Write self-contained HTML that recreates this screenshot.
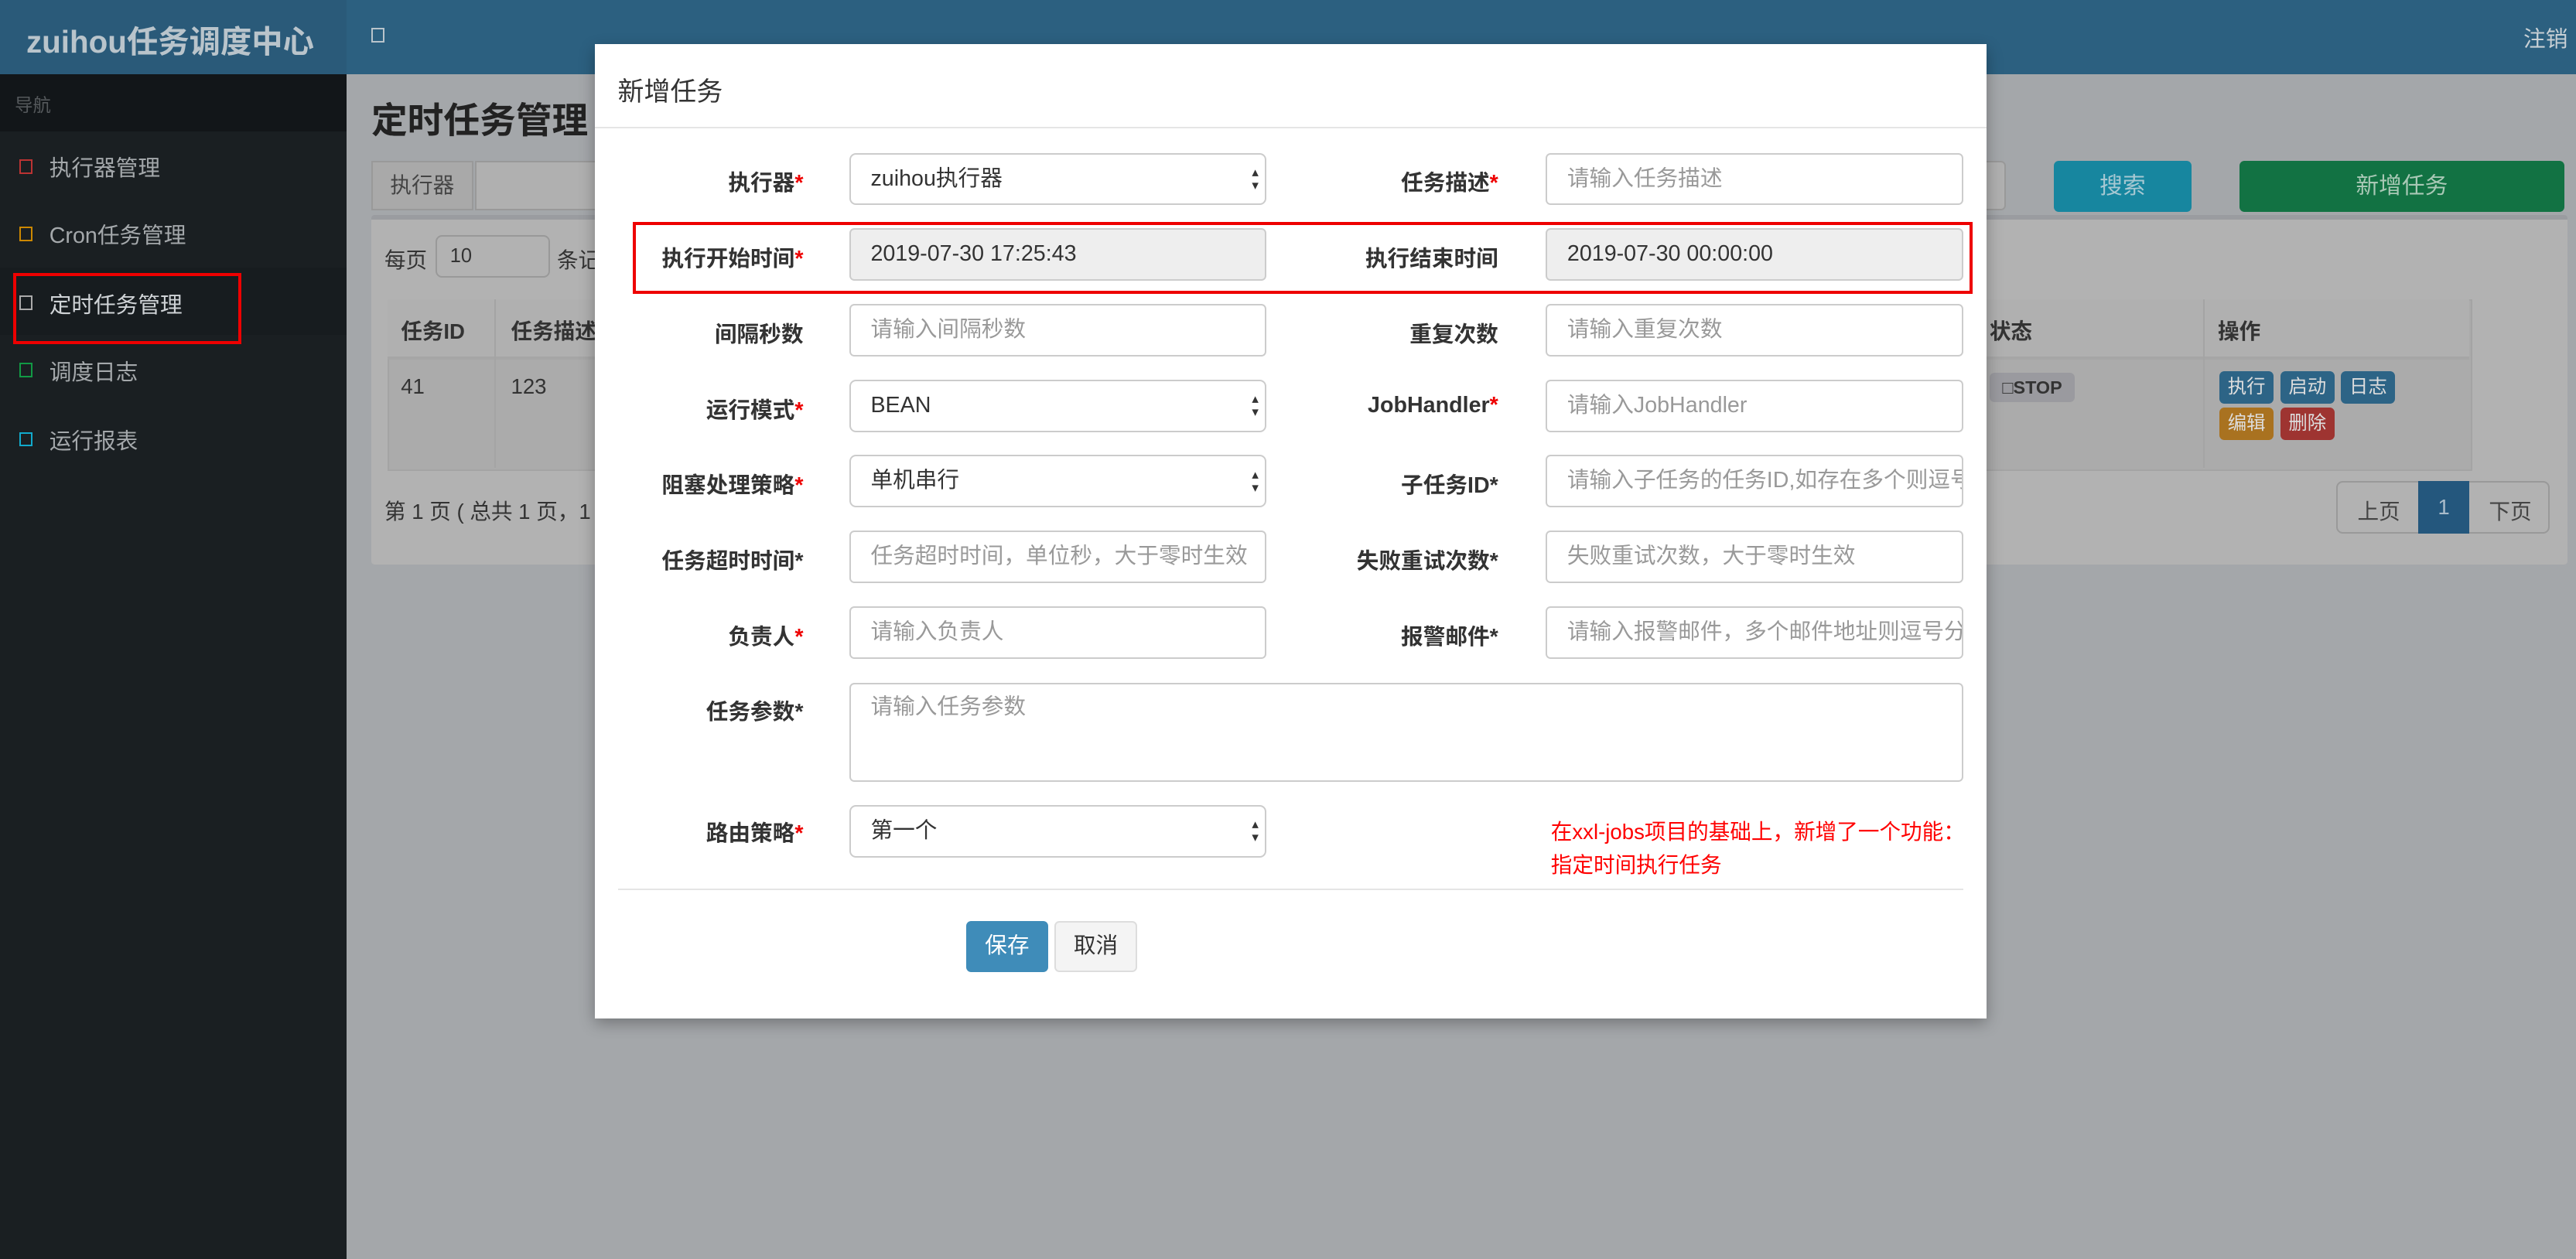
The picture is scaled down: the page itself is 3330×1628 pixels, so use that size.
<!DOCTYPE html>
<html><head><meta charset="utf-8"><style>
html,body{margin:0;padding:0;width:3330px;height:1628px;overflow:hidden;background:#a4a7aa}
#w{zoom:2.12372;width:1568px;height:767px;position:relative;font-family:"Liberation Sans","Noto Sans CJK SC",sans-serif;font-size:13px;color:#333}
.a{position:absolute}
.nav{color:#a4a8ab;font-size:13.5px;left:30px}
.sq{position:absolute;left:12px;width:6px;height:7px;border:1.3px solid}
.lbl{position:absolute;width:140px;text-align:right;font-weight:bold;font-size:13.5px;color:#333}
.lbl i{color:#e00;font-style:normal}
.inp{position:absolute;border:1px solid #ccc;border-radius:3px;background:#fff;box-sizing:border-box;height:32px;padding:0 12px;line-height:30px;color:#999;font-size:13.5px;white-space:nowrap;overflow:hidden}
.sel{color:#333;border-radius:4px}
.sel:after{content:"▴\A▾";white-space:pre;position:absolute;right:4px;top:7px;font-size:8px;line-height:8px;color:#333}
.dis{background:#eee;color:#333}
.btn{position:absolute;color:#ddd;border-radius:3px;text-align:center;font-size:11.5px;line-height:20px;height:20px}
</style></head><body><div id="w">
<!-- top bar -->
<div class="a" style="left:0;top:0;width:1568px;height:45px;background:#2c6080"></div>
<!-- sidebar -->
<div class="a" style="left:0;top:0;width:211px;height:767px;background:#1a1f22"></div>
<div class="a" style="left:0;top:0;width:211px;height:45px;background:#2a5a79"></div>
<div class="a" style="left:16px;top:10px;font-size:19px;font-weight:bold;color:#b9c4cb">zuihou任务调度中心</div>
<div class="a" style="left:226px;top:17px;width:6px;height:7px;border:1.3px solid #b9c4cb"></div>
<div class="a" style="left:1536px;top:13px;color:#c8d0d5;font-size:13.5px">注销</div>
<div class="a" style="left:0;top:45px;width:211px;height:35px;background:#121619"></div>
<div class="a" style="left:9px;top:55px;color:#55595c;font-size:11px">导航</div>
<div class="a" style="left:0;top:163px;width:211px;height:41px;background:#171c1f"></div>
<div class="a" style="left:0;top:80px;width:211px;height:0"><span class="sq" style="top:17px;border-color:#b33"></span><span class="sq" style="top:58px;border-color:#c80"></span><span class="sq" style="top:100px;border-color:#aaa"></span><span class="sq" style="top:141px;border-color:#194"></span><span class="sq" style="top:183px;border-color:#1ac"></span></div>
<div class="a nav" style="top:92px">执行器管理</div>
<div class="a nav" style="top:133px">Cron任务管理</div>
<div class="a nav" style="top:175px;color:#cfd3d6">定时任务管理</div>
<div class="a nav" style="top:216px">调度日志</div>
<div class="a nav" style="top:258px">运行报表</div>
<div class="a" style="left:8px;top:166px;width:135px;height:40px;border:2px solid #e00"></div>
<!-- content -->
<div class="a" style="left:226px;top:56px;font-size:22px;font-weight:bold;color:#222">定时任务管理</div>
<div class="a" style="left:226px;top:98px;width:62px;height:30px;border:1px solid #999;background:#a9a9a9;box-sizing:border-box;line-height:28px;text-align:center;color:#444">执行器</div>
<div class="a" style="left:289px;top:98px;width:932px;height:30px;border:1px solid #999;background:#b0b0b0;box-sizing:border-box;border-radius:0 3px 3px 0"></div>
<div class="a" style="left:1250px;top:98px;width:84px;height:31px;background:#17869f;border-radius:3px;color:#a6c8d2;text-align:center;line-height:31px;font-size:14px">搜索</div>
<div class="a" style="left:1363px;top:98px;width:198px;height:31px;background:#127243;border-radius:3px;color:#a8c8b5;text-align:center;line-height:31px;font-size:14px">新增任务</div>
<div class="a" style="left:226px;top:131px;width:1337px;height:210px;background:#b2b2b2;border-top:3px solid #9a9ca0;border-radius:2px"></div>
<div class="a" style="left:234px;top:148px;color:#333">每页</div>
<div class="a" style="left:265px;top:143px;width:70px;height:26px;border:1px solid #999;border-radius:4px;box-sizing:border-box;line-height:24px;padding-left:8px;font-size:12px">10</div>
<div class="a" style="left:339px;top:148px">条记</div>
<div class="a" style="left:236px;top:182px;width:1267px;height:103px;background:#ababab;border:1px solid #a4a4a4"></div>
<div class="a" style="left:236px;top:182px;width:1267px;height:35px;background:#b0b0b0;border-bottom:2px solid #a6a6a6"></div>
<div class="a" style="left:244px;top:191px;font-weight:bold">任务ID</div>
<div class="a" style="left:301px;top:182px;width:1px;height:103px;background:#a4a4a4"></div>
<div class="a" style="left:311px;top:191px;font-weight:bold">任务描述</div>
<div class="a" style="left:244px;top:228px">41</div><div class="a" style="left:311px;top:228px">123</div>
<div class="a" style="left:1211px;top:191px;font-weight:bold">状态</div>
<div class="a" style="left:1341px;top:182px;width:1px;height:103px;background:#a4a4a4"></div>
<div class="a" style="left:1350px;top:191px;font-weight:bold">操作</div>
<div class="a" style="left:1211px;top:227px;width:52px;height:18px;background:#9a9a9f;border-radius:3px;font-size:11px;font-weight:bold;line-height:18px;text-align:center;color:#333">□STOP</div>
<div class="btn" style="left:1351px;top:226px;width:33px;background:#2d6486">执行</div>
<div class="btn" style="left:1388px;top:226px;width:33px;background:#2d6486">启动</div>
<div class="btn" style="left:1425px;top:226px;width:33px;background:#2d6486">日志</div>
<div class="btn" style="left:1351px;top:248px;width:33px;background:#a97220">编辑</div>
<div class="btn" style="left:1388px;top:248px;width:33px;background:#9e3431">删除</div>
<div class="a" style="left:234px;top:301px">第 1 页 ( 总共 1 页，1</div>
<div class="a" style="left:1422px;top:293px;width:130px;height:32px;border:1px solid #999;border-radius:4px;box-sizing:border-box;background:#b2b2b2"></div>
<div class="a" style="left:1435px;top:301px;color:#444">上页</div>
<div class="a" style="left:1472px;top:293px;width:31px;height:32px;background:#24577d;color:#a9bccb;text-align:center;line-height:32px">1</div>
<div class="a" style="left:1515px;top:301px;color:#444">下页</div>
<!-- modal -->
<div class="a" style="left:362px;top:27px;width:847px;height:593px;background:#fff;box-shadow:0 3px 9px rgba(0,0,0,.3)"></div>
<div class="a" style="left:376px;top:43px;font-size:16px;color:#333">新增任务</div>
<div class="a" style="left:362px;top:77px;width:847px;height:1px;background:#e5e5e5"></div>
<div class="lbl" style="left:349px;top:101px">执行器<i>*</i></div>
<div class="inp sel" style="left:517px;top:93px;width:254px">zuihou执行器</div>
<div class="lbl" style="left:772px;top:101px">任务描述<i>*</i></div>
<div class="inp" style="left:941px;top:93px;width:254px">请输入任务描述</div>
<div class="lbl" style="left:349px;top:147px">执行开始时间<i>*</i></div>
<div class="inp dis" style="left:517px;top:139px;width:254px">2019-07-30 17:25:43</div>
<div class="lbl" style="left:772px;top:147px">执行结束时间</div>
<div class="inp dis" style="left:941px;top:139px;width:254px">2019-07-30 00:00:00</div>
<div class="a" style="left:385px;top:135px;width:812px;height:40px;border:2px solid #e00"></div>
<div class="lbl" style="left:349px;top:193px">间隔秒数</div>
<div class="inp" style="left:517px;top:185px;width:254px">请输入间隔秒数</div>
<div class="lbl" style="left:772px;top:193px">重复次数</div>
<div class="inp" style="left:941px;top:185px;width:254px">请输入重复次数</div>
<div class="lbl" style="left:349px;top:239px">运行模式<i>*</i></div>
<div class="inp sel" style="left:517px;top:231px;width:254px">BEAN</div>
<div class="lbl" style="left:772px;top:239px">JobHandler<i>*</i></div>
<div class="inp" style="left:941px;top:231px;width:254px">请输入JobHandler</div>
<div class="lbl" style="left:349px;top:285px">阻塞处理策略<i>*</i></div>
<div class="inp sel" style="left:517px;top:277px;width:254px">单机串行</div>
<div class="lbl" style="left:772px;top:285px">子任务ID*</div>
<div class="inp" style="left:941px;top:277px;width:254px">请输入子任务的任务ID,如存在多个则逗号分隔</div>
<div class="lbl" style="left:349px;top:331px">任务超时时间*</div>
<div class="inp" style="left:517px;top:323px;width:254px">任务超时时间，单位秒，大于零时生效</div>
<div class="lbl" style="left:772px;top:331px">失败重试次数*</div>
<div class="inp" style="left:941px;top:323px;width:254px">失败重试次数，大于零时生效</div>
<div class="lbl" style="left:349px;top:377px">负责人<i>*</i></div>
<div class="inp" style="left:517px;top:369px;width:254px">请输入负责人</div>
<div class="lbl" style="left:772px;top:377px">报警邮件*</div>
<div class="inp" style="left:941px;top:369px;width:254px">请输入报警邮件，多个邮件地址则逗号分隔</div>
<div class="lbl" style="left:349px;top:423px">任务参数*</div>
<div class="inp" style="left:517px;top:416px;width:678px;height:60px;line-height:28px">请输入任务参数</div>
<div class="lbl" style="left:349px;top:497px">路由策略<i>*</i></div>
<div class="inp sel" style="left:517px;top:490px;width:254px">第一个</div>
<div class="a" style="left:944px;top:497px;color:#f00;font-size:13px;line-height:20px;width:256px;white-space:nowrap;overflow:hidden">在xxl-jobs项目的基础上，新增了一个功能：<br>指定时间执行任务</div>
<div class="a" style="left:376px;top:541px;width:819px;height:1px;background:#e5e5e5"></div>
<div class="a" style="left:588px;top:561px;width:50px;height:31px;background:#3f8cb9;border-radius:3px;color:#fff;text-align:center;line-height:31px;font-size:13.5px">保存</div>
<div class="a" style="left:642px;top:561px;width:50px;height:31px;background:#f4f4f4;border:1px solid #ddd;box-sizing:border-box;border-radius:3px;color:#333;text-align:center;line-height:29px;font-size:13.5px">取消</div>
</div></body></html>
